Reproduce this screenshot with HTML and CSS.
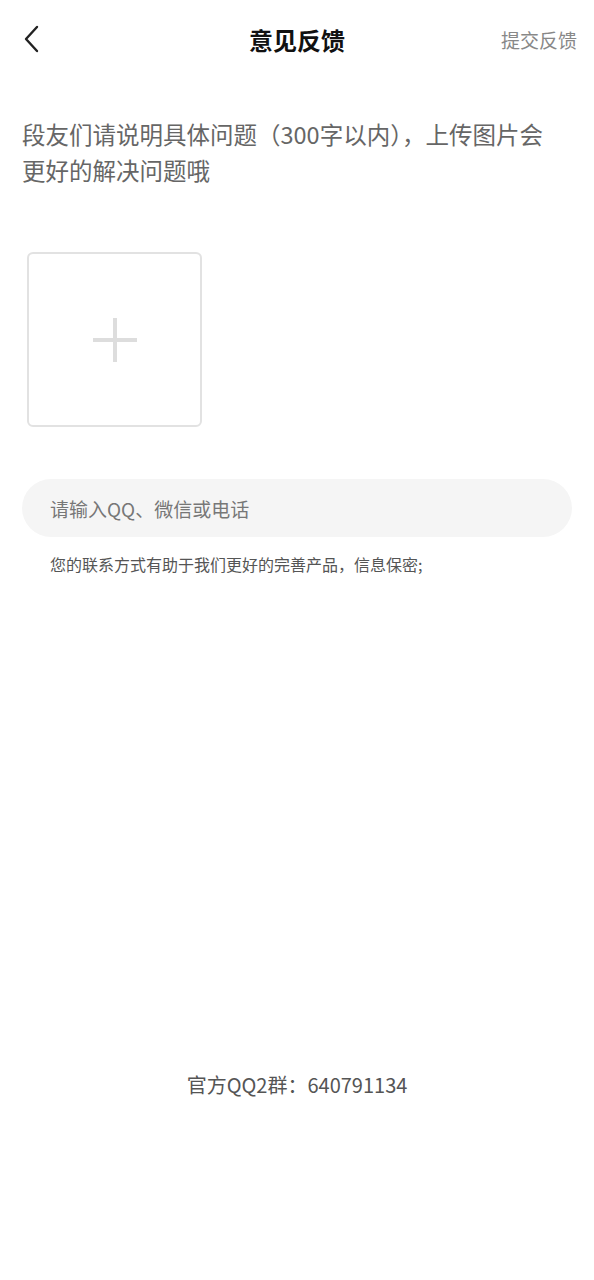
FILE: index.html
```html
<!DOCTYPE html>
<html lang="zh-CN">
<head>
<meta charset="utf-8">
<title>意见反馈</title>
<link rel="stylesheet" href="styles.css">
</head>
<body>
<div class="page">
  <header class="topbar">
    <div class="back">
      <svg width="18" height="28" viewBox="0 0 18 28"><path d="M15 2 L4 14 L15 26" fill="none" stroke="#222" stroke-width="2.4" stroke-linecap="round" stroke-linejoin="round"/></svg>
    </div>
    <div class="title">意见反馈</div>
    <div class="submit">提交反馈</div>
  </header>
  <p class="desc">段友们请说明具体问题（300字以内），上传图片会更好的解决问题哦</p>
  <div class="upload">
    <svg width="46" height="46" viewBox="0 0 46 46"><path d="M23 1 V45 M1 23 H45" stroke="#dddddd" stroke-width="4"/></svg>
  </div>
  <div class="input">请输入QQ、微信或电话</div>
  <p class="hint">您的联系方式有助于我们更好的完善产品，信息保密;</p>
  <div class="spacer"></div>
  <p class="footer">官方QQ2群：640791134</p>
</div>
</body>
</html>
```
FILE: styles.css
```css
html, body {
  margin: 0;
  padding: 0;
  background: #ffffff;
}
body {
  font-family: "Noto Sans CJK SC", "Noto Sans", sans-serif;
}
.page {
  width: 594px;
  height: 1280px;
  display: flex;
  flex-direction: column;
  box-sizing: border-box;
}
.topbar {
  height: 78px;
  display: flex;
  align-items: center;
  justify-content: space-between;
  padding: 0 17px 0 22px;
  position: relative;
}
.back {
  width: 20px;
  height: 28px;
  display: flex;
  align-items: center;
}
.title {
  position: absolute;
  left: 0;
  right: 0;
  text-align: center;
  font-size: 24px;
  font-weight: 700;
  color: #111;
  pointer-events: none;
}
.submit {
  font-size: 19px;
  color: #888;
}
.desc {
  margin: 38px 40px 0 22px;
  font-size: 23.5px;
  line-height: 36px;
  color: #666;
}
.upload {
  margin: 64px 0 0 27px;
  width: 175px;
  height: 175px;
  box-sizing: border-box;
  border: 2px solid #e2e2e2;
  border-radius: 6px;
  display: flex;
  align-items: center;
  justify-content: center;
}
.input {
  margin: 52px 22px 0 22px;
  height: 58px;
  border-radius: 29px;
  background: #f5f5f5;
  display: flex;
  align-items: center;
  padding-left: 28px;
  font-size: 19px;
  color: #777;
}
.hint {
  margin: 16px 0 0 50px;
  font-size: 16px;
  line-height: 22px;
  color: #555;
}
.spacer {
  height: 496px;
}
.footer {
  margin: 0;
  text-align: center;
  font-size: 20px;
  line-height: 28px;
  color: #555;
}
```
